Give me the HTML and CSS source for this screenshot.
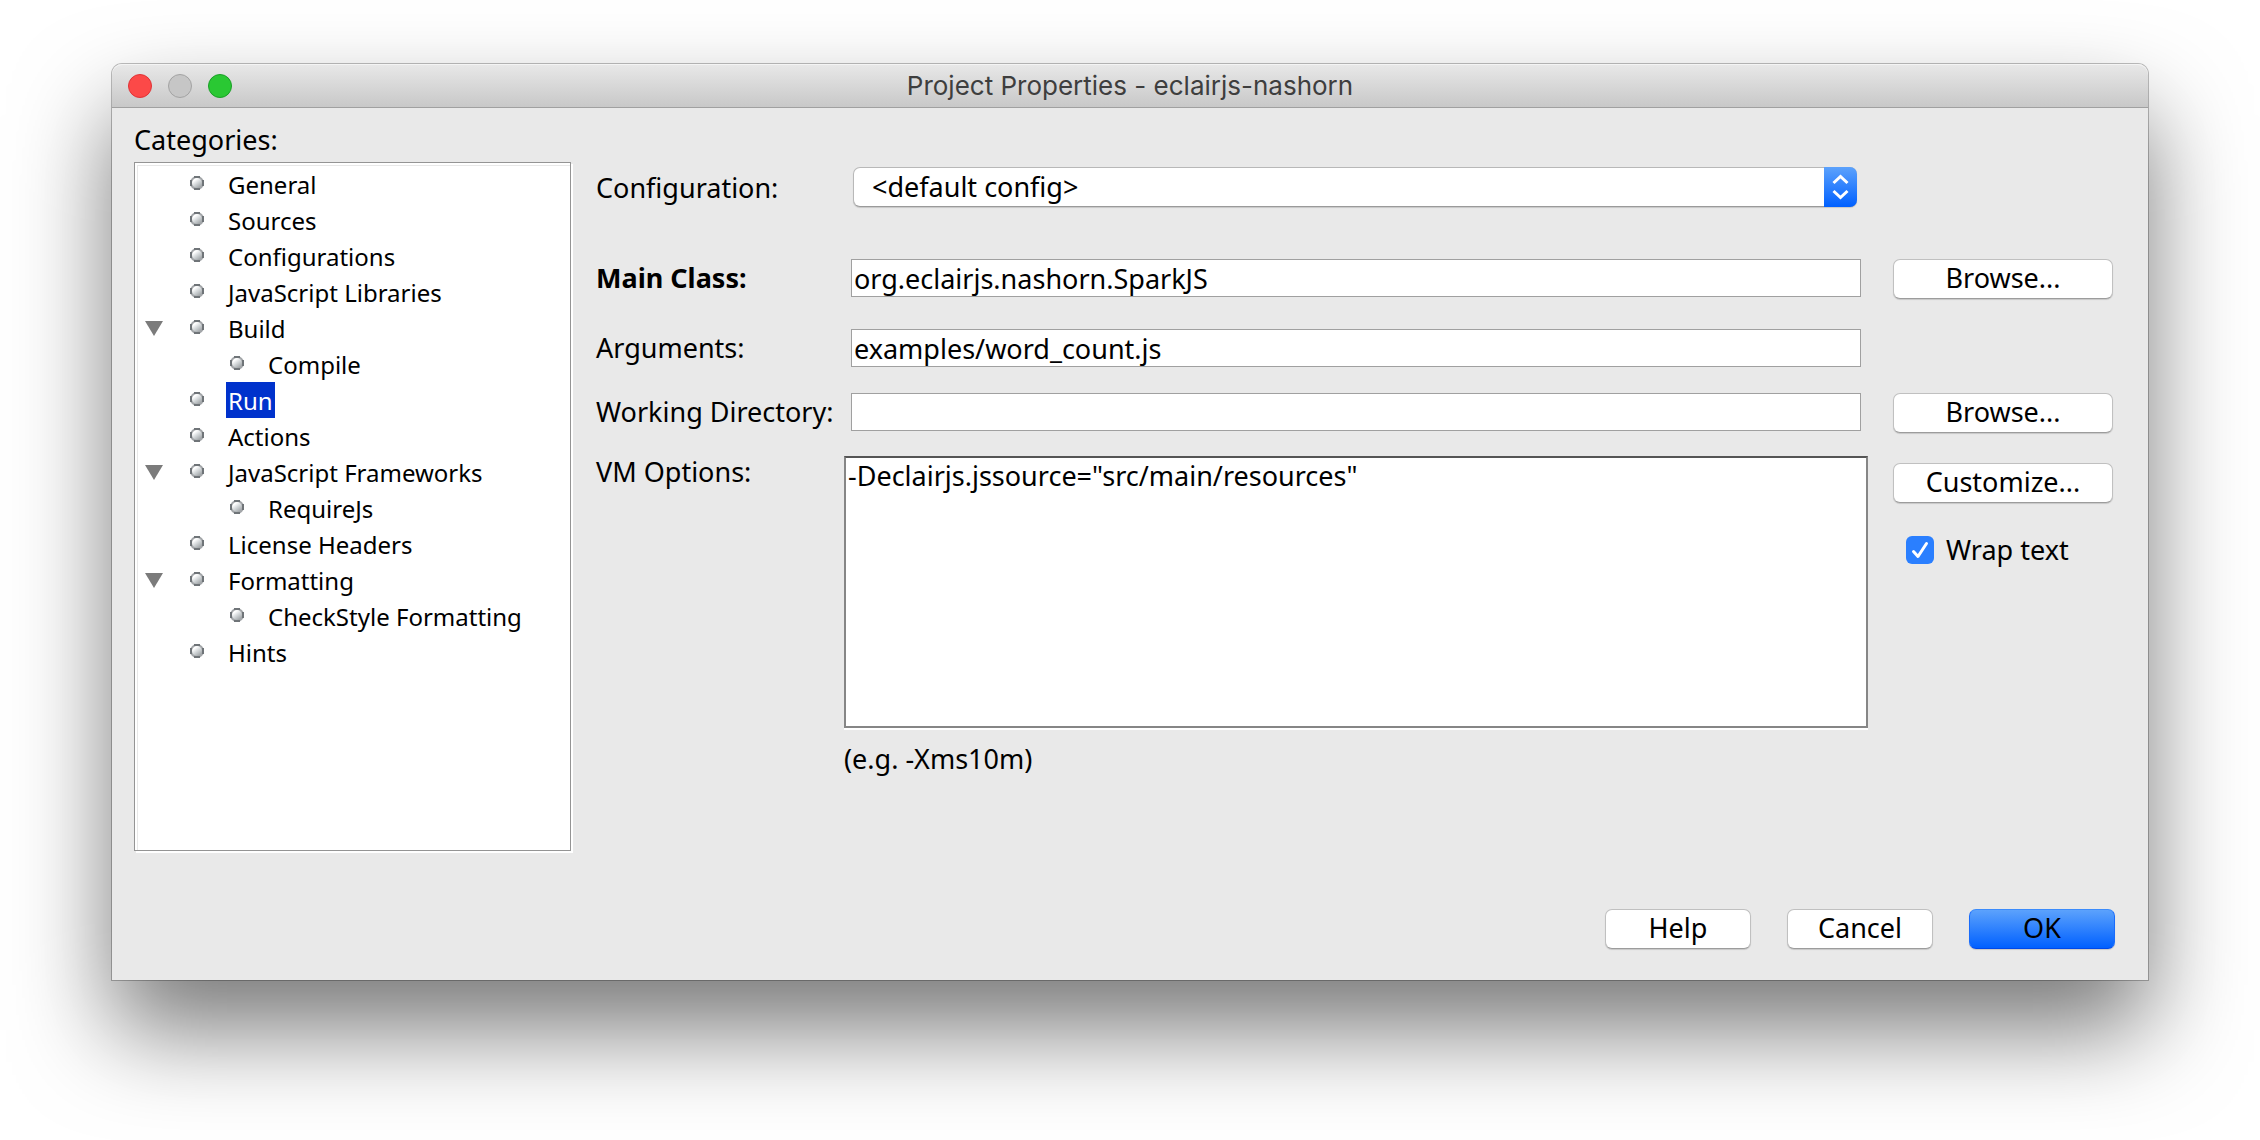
FILE: index.html
```html
<!DOCTYPE html>
<html lang="en">
<head>
<meta charset="utf-8">
<title>Project Properties - eclairjs-nashorn</title>
<link rel="stylesheet" href="styles.css">
</head>
<body>
<svg class="defs" aria-hidden="true">
  <defs>
    <linearGradient id="ball" x1="0.2" y1="0.1" x2="0.8" y2="0.9">
      <stop offset="0.2" stop-color="#ffffff"/>
      <stop offset="0.5" stop-color="#d6dadc"/>
      <stop offset="1" stop-color="#989da0"/>
    </linearGradient>
    <symbol id="bullet" viewBox="0 0 14 14">
      <circle cx="7" cy="7" r="6" fill="url(#ball)" stroke="#a4a7aa" stroke-width="2"/>
      <path d="M4 1H10M4 13H10M1 4V10M13 4V10" fill="none" stroke="#6f7478" stroke-width="2"/>
    </symbol>
    <symbol id="triangle" viewBox="0 0 18 15"><path d="M0 0H18L9 15Z" fill="#7b7b7b"/></symbol>
  </defs>
</svg>
<main class="window">
  <header class="titlebar">
    <div class="lights">
      <button class="light close" aria-label="Close"></button>
      <button class="light minimize" aria-label="Minimize" disabled></button>
      <button class="light maximize" aria-label="Zoom"></button>
    </div>
    <h1 class="title">Project Properties - eclairjs-nashorn</h1>
  </header>
  <form class="content">
    <div class="panes">
      <nav class="categories" aria-labelledby="categories-label">
        <h2 class="categories-label" id="categories-label">Categories:</h2>
        <ul class="tree">
          <li><div class="node"><svg class="bullet"><use href="#bullet"/></svg><span class="name">General</span></div></li>
          <li><div class="node"><svg class="bullet"><use href="#bullet"/></svg><span class="name">Sources</span></div></li>
          <li><div class="node"><svg class="bullet"><use href="#bullet"/></svg><span class="name">Configurations</span></div></li>
          <li><div class="node"><svg class="bullet"><use href="#bullet"/></svg><span class="name">JavaScript Libraries</span></div></li>
          <li><div class="node"><svg class="triangle"><use href="#triangle"/></svg><svg class="bullet"><use href="#bullet"/></svg><span class="name">Build</span></div>
            <ul class="branch">
              <li><div class="node"><svg class="bullet"><use href="#bullet"/></svg><span class="name">Compile</span></div></li>
            </ul>
          </li>
          <li><div class="node"><svg class="bullet"><use href="#bullet"/></svg><span class="name selected">Run</span></div></li>
          <li><div class="node"><svg class="bullet"><use href="#bullet"/></svg><span class="name">Actions</span></div></li>
          <li><div class="node"><svg class="triangle"><use href="#triangle"/></svg><svg class="bullet"><use href="#bullet"/></svg><span class="name">JavaScript Frameworks</span></div>
            <ul class="branch">
              <li><div class="node"><svg class="bullet"><use href="#bullet"/></svg><span class="name">RequireJs</span></div></li>
            </ul>
          </li>
          <li><div class="node"><svg class="bullet"><use href="#bullet"/></svg><span class="name">License Headers</span></div></li>
          <li><div class="node"><svg class="triangle"><use href="#triangle"/></svg><svg class="bullet"><use href="#bullet"/></svg><span class="name">Formatting</span></div>
            <ul class="branch">
              <li><div class="node"><svg class="bullet"><use href="#bullet"/></svg><span class="name">CheckStyle Formatting</span></div></li>
            </ul>
          </li>
          <li><div class="node"><svg class="bullet"><use href="#bullet"/></svg><span class="name">Hints</span></div></li>
        </ul>
      </nav>
      <section class="settings">
        <div class="row row-config">
          <label class="label" for="config">Configuration:</label>
          <div class="select-box">
            <select class="select" id="config"><option>&lt;default config&gt;</option></select>
            <svg class="stepper" viewBox="0 0 33 40" aria-hidden="true"><path d="M9.500 16L16.500 9.500L23.500 16M9.500 24L16.500 30.500L23.500 24" fill="none" stroke="#fff" stroke-width="3"/></svg>
          </div>
        </div>
        <div class="row row-main">
          <label class="label required" for="main-class">Main Class:</label>
          <input class="input" id="main-class" type="text" value="org.eclairjs.nashorn.SparkJS">
          <button class="button" type="button">Browse...</button>
        </div>
        <div class="row row-args">
          <label class="label" for="arguments">Arguments:</label>
          <input class="input" id="arguments" type="text" value="examples/word_count.js">
        </div>
        <div class="row row-dir">
          <label class="label" for="directory">Working Directory:</label>
          <input class="input" id="directory" type="text">
          <button class="button" type="button">Browse...</button>
        </div>
        <div class="row">
          <label class="label label-top" for="vm-options">VM Options:</label>
          <div class="vm">
            <textarea class="textarea" id="vm-options" spellcheck="false">-Declairjs.jssource="src/main/resources"</textarea>
            <p class="hint">(e.g. -Xms10m)</p>
          </div>
          <div class="vm-actions">
            <button class="button" type="button">Customize...</button>
            <label class="check">
              <span class="check-box">
                <input class="check-input" type="checkbox" checked>
                <svg class="check-mark" viewBox="0 0 28 28" aria-hidden="true"><path d="M7.500 15.500L12 20.500L20.500 7.500" fill="none" stroke="#fff" stroke-width="3" stroke-linecap="round" stroke-linejoin="round"/></svg>
              </span>
              Wrap text
            </label>
          </div>
        </div>
      </section>
    </div>
    <footer class="footer">
      <button class="button small" type="button">Help</button>
      <button class="button small" type="button">Cancel</button>
      <button class="button small primary" type="submit">OK</button>
    </footer>
  </form>
</main>
</body>
</html>
```
FILE: styles.css
```css
* {
  box-sizing: border-box;
}

body {
  min-height: 100vh;
  margin: 0;
  padding: 64px 112px 160px;
  background: #fff;
  color: #000;
  font: 27px/32px "Noto Sans", "Open Sans", sans-serif;
}

.defs {
  position: absolute;
  width: 0;
  height: 0;
}

.window {
  background: #e9e9e9;
  border-radius: 10px 10px 0 0;
  box-shadow: 0 0 0 1px rgba(0, 0, 0, 0.25), 0 50px 96px rgba(0, 0, 0, 0.53);
}

.titlebar {
  display: grid;
  grid-template-columns: 1fr auto 1fr;
  align-items: center;
  height: 44px;
  padding: 0 16px;
  background: linear-gradient(#e8e8e8, #c8c8c8);
  border-bottom: 1px solid #a0a0a0;
  border-radius: 10px 10px 0 0;
  box-shadow: inset 0 1px #f4f4f4;
}

.lights {
  display: flex;
  gap: 16px;
}

.light {
  width: 24px;
  height: 24px;
  padding: 0;
  border: 1px solid #a3a3a3;
  border-radius: 50%;
  background: #c6c6c6;
}

.close {
  border-color: #e03336;
  background: #fc4948;
}

.maximize {
  border-color: #1a9f27;
  background: #2ac833;
}

.title {
  margin: 0;
  color: #3e3e3e;
  font: 26px/32px Inter, Roboto, sans-serif;
}

.content {
  padding: 0 33px 31px 22px;
}

.panes {
  display: flex;
  gap: 23px;
}

.categories {
  width: 439px;
  flex: none;
  padding-top: 16px;
}

.categories-label {
  margin: 0 0 6px;
  font: inherit;
}

.tree {
  min-height: 689px;
  margin: 0 2px 2px 0;
  padding: 3px 0;
  list-style: none;
  background: #fff;
  border: 1px solid #949494;
  box-shadow: 2px 2px #fff, inset 2px 2px #fff, inset 3px 3px #e8e8e8;
  font-size: 24px;
}

.branch {
  margin: 0;
  padding: 0 0 0 40px;
  list-style: none;
}

.node {
  display: grid;
  grid-template-columns: 45px 36px 1fr;
  height: 36px;
  padding-left: 10px;
}

.bullet {
  grid-column: 2;
  grid-row: 1;
  width: 14px;
  height: 14px;
  margin-top: 10px;
}

.triangle {
  grid-column: 1;
  grid-row: 1;
  width: 18px;
  height: 15px;
  margin-top: 11px;
}

.name {
  grid-column: 3;
  grid-row: 1;
  justify-self: start;
  padding: 2px 2px 0;
  line-height: 34px;
  white-space: nowrap;
}

.selected {
  background: #0032cc;
  color: #fff;
}

.settings {
  flex: 1;
  padding-top: 59px;
}

.row {
  display: grid;
  grid-template-columns: 248px 1fr 220px;
  column-gap: 25px;
  padding-right: 2px;
}

.row > :nth-child(2) {
  margin-left: -25px;
}

.row-config {
  margin-bottom: 50px;
}

.row-main {
  margin-bottom: 30px;
}

.row-args {
  margin-bottom: 26px;
}

.row-dir {
  margin-bottom: 23px;
}

.label {
  line-height: 38px;
  white-space: nowrap;
}

.row-config .label {
  line-height: 42px;
}

.label-top {
  line-height: 32px;
}

.required {
  font-weight: 700;
}

.row > .input {
  height: 38px;
  margin: 0 7px 0 -18px;
  padding: 0 2px;
  border: 1px solid #a0a0a0;
  border-radius: 0;
  background: #fff;
  font: inherit;
}

.row > .select-box {
  display: grid;
  height: 40px;
  margin: 0 11px 0 -16px;
}

.select {
  grid-area: 1 / 1;
  padding: 0 40px 0 18px;
  border: 1px solid #b8b8b8;
  border-bottom-color: #9a9a9a;
  border-radius: 7px;
  background: #fff;
  box-shadow: 0 1px 1px rgba(0, 0, 0, 0.15);
  color: #000;
  font: inherit;
  line-height: 38px;
  appearance: none;
}

.stepper {
  grid-area: 1 / 1;
  justify-self: end;
  width: 33px;
  height: 40px;
  border-radius: 0 7px 7px 0;
  background: linear-gradient(#5ca2fc, #0060ff);
  pointer-events: none;
}

.textarea {
  display: block;
  width: 100%;
  height: 272px;
  padding: 2px;
  border: 2px solid #868686;
  border-top-color: #555;
  border-radius: 0;
  background: #fff;
  box-shadow: 0 2px #fff;
  font: inherit;
  resize: none;
}

.hint {
  margin: 15px 0 0;
}

.vm-actions {
  padding-top: 7px;
}

.button {
  width: 100%;
  height: 40px;
  padding: 0 0 2px;
  border: 1px solid #c0c0c0;
  border-bottom-color: #9c9c9c;
  border-radius: 7px;
  background: #fff;
  box-shadow: 0 1px 1px rgba(0, 0, 0, 0.15);
  color: #000;
  font: inherit;
}

.check {
  display: flex;
  align-items: center;
  gap: 12px;
  margin: 31px 0 0 13px;
}

.check-box {
  display: grid;
}

.check-input {
  grid-area: 1 / 1;
  width: 28px;
  height: 28px;
  margin: 0;
  border-radius: 6px;
  background: #2a7fff;
  appearance: none;
}

.check-mark {
  grid-area: 1 / 1;
  width: 28px;
  height: 28px;
  pointer-events: none;
}

.footer {
  display: flex;
  justify-content: flex-end;
  gap: 36px;
  margin-top: 56px;
}

.small {
  width: 146px;
}

.primary {
  border-color: #3b8bfb #1a6cfb #0048e8;
  background: linear-gradient(#5ca2fc, #0060ff);
}
```
